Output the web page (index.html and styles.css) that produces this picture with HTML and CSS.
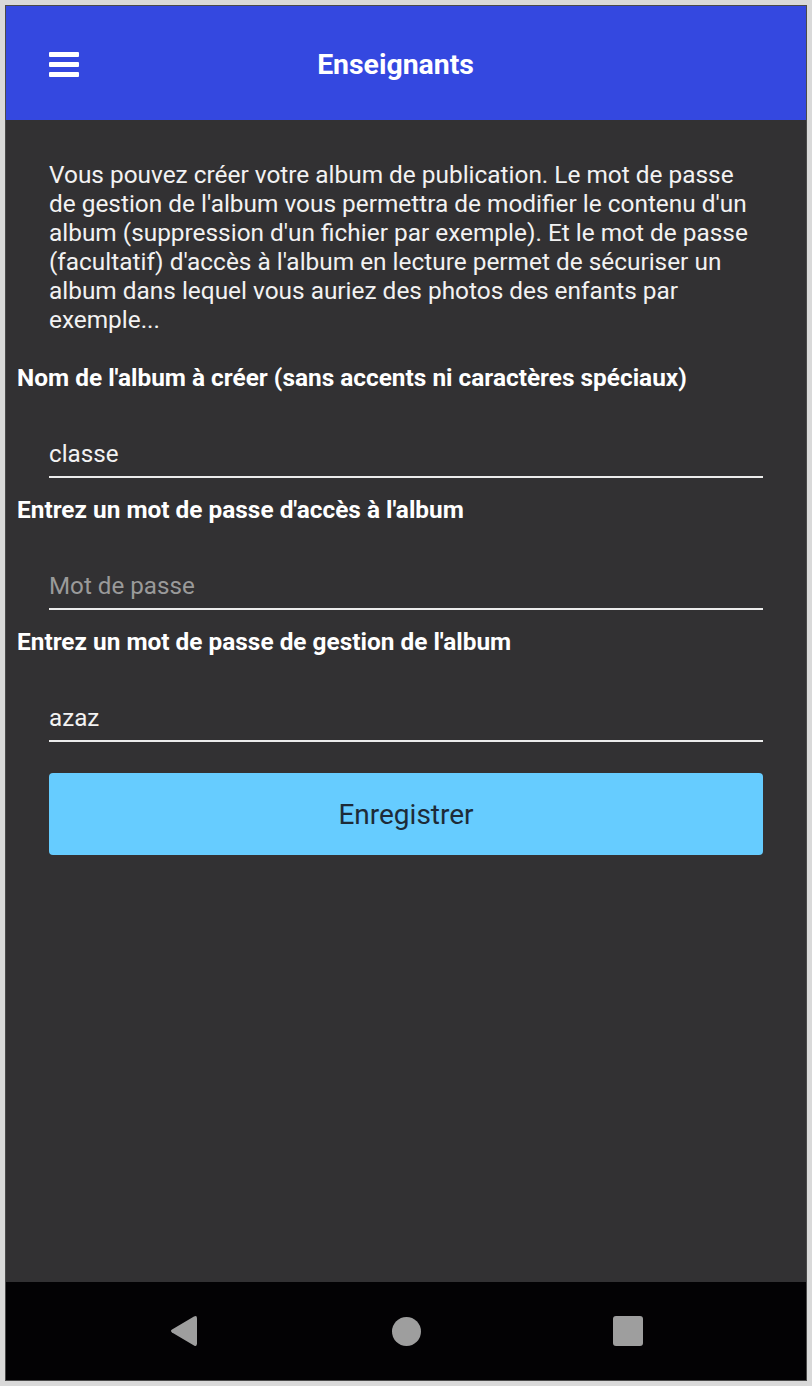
FILE: index.html
```html
<!DOCTYPE html>
<html lang="fr">
<head>
    <meta charset="UTF-8">
    <meta name="viewport" content="width=device-width, initial-scale=1.0">
    <title>Enseignants</title>
    <link rel="stylesheet" href="styles.css">
</head>
<body>
    <div class="phone">
        <header class="app-bar">
            <span class="menu-icon">
                <span></span><span></span><span></span>
            </span>
            <h1 class="app-title">Enseignants</h1>
        </header>

        <main class="content">
            <p class="intro">Vous pouvez créer votre album de publication. Le mot de passe de gestion de l'album vous permettra de modifier le contenu d'un album (suppression d'un fichier par exemple). Et le mot de passe (facultatif) d'accès à l'album en lecture permet de sécuriser un album dans lequel vous auriez des photos des enfants par exemple...</p>

            <label class="field-label">Nom de l'album à créer (sans accents ni caractères spéciaux)</label>
            <div class="field">classe</div>

            <label class="field-label">Entrez un mot de passe d'accès à l'album</label>
            <div class="field placeholder">Mot de passe</div>

            <label class="field-label">Entrez un mot de passe de gestion de l'album</label>
            <div class="field">azaz</div>

            <button class="save-btn">Enregistrer</button>
        </main>

        <nav class="sys-nav">
            <span class="nav-icon">
                <svg width="32" height="34" viewBox="0 0 32 34"><path d="M4 15.6 L26 2.6 Q29 1 29 4.4 L29 29.6 Q29 33 26 31.4 L4 18.4 Q1.8 17 4 15.6 Z" fill="#9e9e9e"/></svg>
            </span>
            <span class="nav-icon"><span class="nav-circle"></span></span>
            <span class="nav-icon"><span class="nav-square"></span></span>
        </nav>
    </div>
</body>
</html>
```

FILE: styles.css
```css
* {
    margin: 0;
    padding: 0;
    box-sizing: border-box;
}

body {
    background-color: #d9d9d9;
    padding: 5px;
    font-family: Roboto, "Noto Sans", sans-serif;
}

.phone {
    border: 1px solid #4a4a4a;
    height: 1376px;
    display: flex;
    flex-direction: column;
    background-color: #323133;
}

/* Top app bar */
.app-bar {
    height: 114px;
    background-color: #3448e0;
    display: flex;
    align-items: center;
    padding-left: 43px;
}

.menu-icon {
    width: 30px;
    display: flex;
    flex-direction: column;
    gap: 5px;
    margin-top: 2px;
}

.menu-icon span {
    display: block;
    height: 5px;
    background-color: #fff;
    border-radius: 1px;
}

.app-title {
    flex: 1;
    text-align: center;
    padding-right: 94px;
    margin-top: 3px;
    color: #fff;
    font-size: 28.4px;
    font-weight: 700;
}

/* Form */
.content {
    flex: 1;
    padding: 40px 11px 0;
}

.intro {
    margin: 0 32px 29px;
    color: #f2f2f2;
    font-size: 24.4px;
    line-height: 29px;
}

.field-label {
    display: block;
    color: #fff;
    font-size: 24.4px;
    font-weight: 700;
    line-height: 29px;
    margin-bottom: 33px;
}

.field {
    margin: 0 32px 17px;
    height: 53px;
    padding-top: 6px;
    display: flex;
    align-items: center;
    border-bottom: 2px solid #ececec;
    color: #f2f2f2;
    font-size: 24.2px;
}

.field.placeholder {
    color: #9a9a9a;
}

.save-btn {
    display: block;
    width: calc(100% - 64px);
    margin: 31px 32px 0;
    height: 82px;
    border: none;
    border-radius: 4px;
    background-color: #66ccff;
    color: #1d2b38;
    font-family: Roboto, "Noto Sans", sans-serif;
    font-size: 28px;
}

/* Android navigation bar */
.sys-nav {
    height: 98px;
    background-color: #030204;
    display: flex;
    justify-content: center;
    align-items: center;
    gap: 190px;
}

.nav-icon {
    width: 32px;
    height: 34px;
    display: flex;
    align-items: center;
    justify-content: center;
}

.nav-circle {
    width: 29px;
    height: 29px;
    border-radius: 50%;
    background-color: #9e9e9e;
}

.nav-square {
    width: 30px;
    height: 30px;
    border-radius: 3px;
    background-color: #9e9e9e;
}
```
